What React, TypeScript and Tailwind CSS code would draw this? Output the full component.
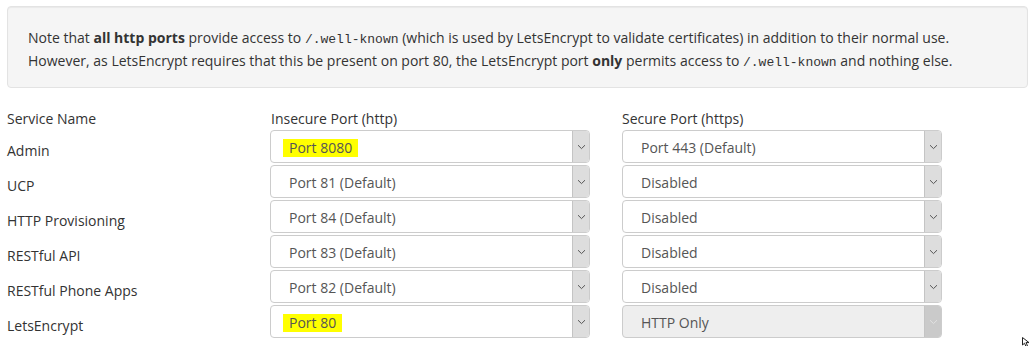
import React from "react";

type Row = {
  name: string;
  http: string;
  https: string;
  httpMark?: boolean;
  httpsDisabled?: boolean;
};

const rows: Row[] = [
  { name: "Admin", http: "Port 8080", https: "Port 443 (Default)", httpMark: true },
  { name: "UCP", http: "Port 81 (Default)", https: "Disabled" },
  { name: "HTTP Provisioning", http: "Port 84 (Default)", https: "Disabled" },
  { name: "RESTful API", http: "Port 83 (Default)", https: "Disabled" },
  { name: "RESTful Phone Apps", http: "Port 82 (Default)", https: "Disabled" },
  { name: "LetsEncrypt", http: "Port 80", https: "HTTP Only", httpMark: true, httpsDisabled: true },
];

function Chevron({ light }: { light?: boolean }) {
  return (
    <svg width="9" height="6" viewBox="0 0 9 6" className="block">
      <path d="M1 1.2 L4.5 4.6 L8 1.2" fill="none" stroke={light ? "#e2e2e2" : "#555"} strokeWidth="1" />
    </svg>
  );
}

function FakeSelect({ value, mark, disabled }: { value: string; mark?: boolean; disabled?: boolean }) {
  return (
    <div
      className={`mt-px flex h-[33px] w-[320px] rounded-[4px] border border-[#cccccc] ${disabled ? "bg-[#eeeeee]" : "bg-white"}`}
    >
      <div className="flex flex-1 items-center pt-[2px] pl-[12px] text-[14px] text-[#555555]">
        {mark ? (
          <span className="bg-[#ffff00] px-[6px] leading-[18px]">{value}</span>
        ) : (
          <span className="pl-[6px]">{value}</span>
        )}
      </div>
      <div
        className={`flex w-[17px] items-center justify-center rounded-r-[3px] border-l border-[#c4c4c4] ${disabled ? "bg-[#cacaca]" : "bg-[#dddddd]"}`}
      >
        <Chevron light={disabled} />
      </div>
    </div>
  );
}

export default function App() {
  return (
    <div className="relative h-[346px] w-[1035px] overflow-hidden bg-white font-['Open_Sans',sans-serif] text-[14px] text-[#333333]">
      <div className="pl-[7px] pr-[7px] pt-[6px]">
        {/* info well */}
        <div className="h-[82px] rounded-[4px] border border-[#e3e3e3] bg-[#f5f5f5] px-[20px] pt-[20px] leading-[21px] shadow-[inset_0_1px_1px_rgba(0,0,0,0.05)]">
          <p>
            Note that <b>all http ports</b> provide access to{" "}
            <code className="font-['Liberation_Mono',monospace] text-[13px]">/.well-known</code> (which is used by
            LetsEncrypt to validate certificates) in addition to their normal use.
          </p>
          <p>
            However, as LetsEncrypt requires that this be present on port 80, the LetsEncrypt port <b>only</b>{" "}
            permits access to <code className="font-['Liberation_Mono',monospace] text-[13px]">/.well-known</code> and
            nothing else.
          </p>
        </div>

        {/* port table */}
        <div className="mt-[21px] grid grid-cols-[263px_352px_1fr] leading-[20px]">
          <div>Service Name</div>
          <div className="pl-px">Insecure Port (http)</div>
          <div>Secure Port (https)</div>
          {rows.map((r) => (
            <React.Fragment key={r.name}>
              <div className="h-[35px] pt-[12px]">{r.name}</div>
              <div className="h-[35px]">
                <FakeSelect value={r.http} mark={r.httpMark} />
              </div>
              <div className="h-[35px]">
                <FakeSelect value={r.https} disabled={r.httpsDisabled} />
              </div>
            </React.Fragment>
          ))}
        </div>
      </div>

      {/* mouse pointer */}
      <svg width="9" height="10" viewBox="0 0 9 10" className="absolute left-[1022px] top-[337px]">
        <path d="M0.5 0.5 L0.5 8 L2.5 6.2 L4 9.5 L5.5 8.8 L4 5.6 L7 5.6 Z" fill="white" stroke="#222" strokeWidth="1" />
      </svg>
    </div>
  );
}
